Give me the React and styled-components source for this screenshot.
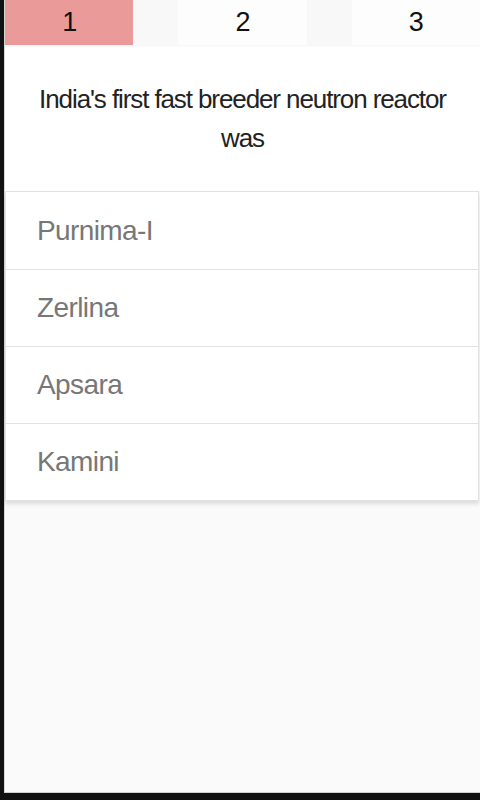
import React from 'react'
import styled, { createGlobalStyle } from 'styled-components'

const GlobalStyle = createGlobalStyle`
  html, body {
    margin: 0;
    padding: 0;
    background: #111;
  }
  * { box-sizing: border-box; }
`

const tabs = ['1', '2', '3']
const options = ['Purnima-I', 'Zerlina', 'Apsara', 'Kamini']

const App = () => (
  <Frame>
    <GlobalStyle />
    <Screen>
      <TabBar>
        {tabs.map((t, i) => (
          <Tab key={t} active={i === 0}>{t}</Tab>
        ))}
      </TabBar>
      <Question>India's first fast breeder neutron reactor was</Question>
      <OptionList>
        {options.map(o => (
          <Option key={o}>{o}</Option>
        ))}
      </OptionList>
    </Screen>
  </Frame>
)

const Frame = styled.div`
  height: 800px;
  padding: 0 0 7px 4px;
  background: #111;
`
const Screen = styled.div`
  height: 100%;
  background: #fafafa;
  border-left: 1px solid #d8d8d8;
  border-bottom: 1px solid #cfcfcf;
  display: flex;
  flex-direction: column;
  font-family: "Liberation Sans", Arial, sans-serif;
`
const TabBar = styled.div`
  height: 45px;
  display: flex;
  gap: 45px;
  background: #f8f8f8;
  box-shadow: 0 1px 2px rgba(0, 0, 0, 0.05);
  position: relative;
  z-index: 1;
`
const Tab = styled.div`
  flex: 1;
  display: flex;
  align-items: center;
  justify-content: center;
  font-size: 27px;
  letter-spacing: -1px;
  color: #111;
  background: ${p => (p.active ? '#eb9a9a' : '#fdfdfd')};
`
const Question = styled.div`
  background: #fff;
  padding: 35px 28px 33px;
  text-align: center;
  font-size: 26px;
  letter-spacing: -1.1px;
  line-height: 39px;
  color: #222;
`
const OptionList = styled.div`
  background: #fff;
  border: 1px solid #e2e2e2;
  box-shadow: 0 3px 4px rgba(0, 0, 0, 0.12);
  margin-right: 1px;
`
const Option = styled.div`
  height: 77px;
  display: flex;
  align-items: center;
  padding-left: 31px;
  font-size: 28px;
  letter-spacing: -0.6px;
  color: #777;
  & + & {
    border-top: 1px solid #e2e2e2;
  }
`

export default App
